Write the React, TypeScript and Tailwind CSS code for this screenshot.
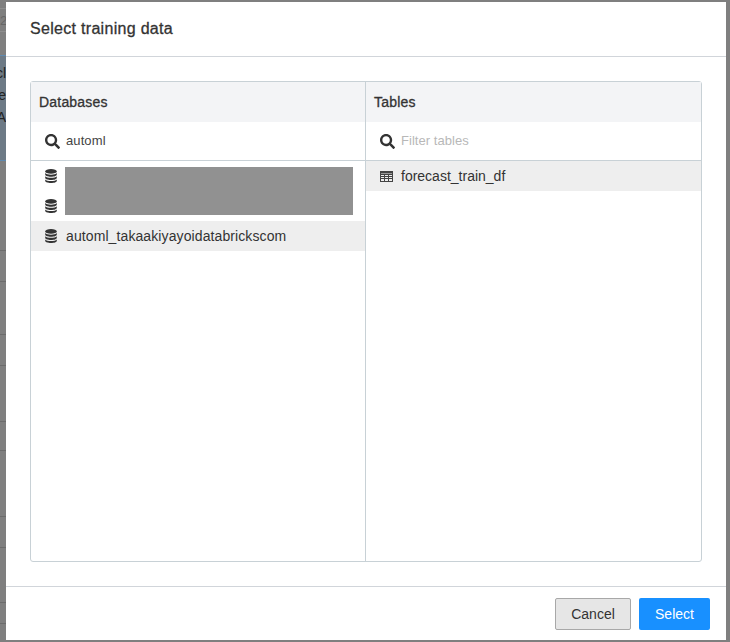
import { FaSearch } from "react-icons/fa";

function DbIcon() {
  return (
    <svg width="12" height="14" viewBox="0 0 12 14" className="shrink-0 text-[#333]" fill="currentColor">
      <ellipse cx="6" cy="2.400" rx="5.800" ry="2.400" />
      <path d="M0.200 4.100c1 1 3.100 1.600 5.800 1.600s4.800-.6 5.800-1.600v1.300c0 1.300-2.600 2.300-5.800 2.300s-5.800-1-5.800-2.300z" />
      <path d="M0.200 7.200c1 1 3.100 1.600 5.800 1.600s4.800-.6 5.800-1.600v1.500c0 1.300-2.600 2.300-5.800 2.300s-5.800-1-5.800-2.300z" />
      <path d="M0.200 10.500c1 1 3.100 1.500 5.800 1.500s4.800-.5 5.800-1.500v1.200c0 1.300-2.600 2.300-5.800 2.300s-5.800-1-5.800-2.300z" />
    </svg>
  );
}

function TableIcon() {
  return (
    <svg width="13" height="11" viewBox="0 0 13 11" className="shrink-0 text-[#444]" fill="none" stroke="currentColor" strokeWidth="1">
      <rect x="0.500" y="0.500" width="12" height="10" />
      <path d="M0.500 3.500h12M0.500 5.500h12M0.500 7.500h12M4.500 3v7.500M8.500 3v7.500" />
      <path d="M0.500 1.500h12" strokeWidth="2" />
    </svg>
  );
}

export default function App() {
  return (
    <div className="relative w-[730px] h-[642px] overflow-hidden bg-[#7f7f7f] font-['Liberation_Sans',Arial,sans-serif]">
      {/* page behind the modal, only a few px of it show on the left */}
      <div className="flex flex-col w-[6px] h-full">
        <div className="h-[8px] shrink-0" />
        <div className="h-[24px] shrink-0 border-y border-[#8e8e8e] flex items-center text-[13px] leading-none text-[#666] overflow-hidden">2</div>
        <div className="h-[23px] shrink-0" />
        <div className="h-[106px] shrink-0 bg-[#6d7a86] border-y border-[#5f8ab0] flex flex-col items-end pt-[10px] gap-[7px] text-[14px] leading-[15px] text-[#222] overflow-hidden">
          <span className="whitespace-nowrap">cl</span>
          <span className="whitespace-nowrap">e</span>
          <span className="whitespace-nowrap">A</span>
        </div>
        <div className="h-[90px] shrink-0 border-b border-[#6c6c6c]" />
        <div className="h-[31px] shrink-0 border-b border-[#6c6c6c]" />
        <div className="h-[53px] shrink-0 border-b border-[#6c6c6c]" />
        <div className="h-[31px] shrink-0 border-b border-[#6c6c6c]" />
        <div className="h-[56px] shrink-0 border-b border-[#6c6c6c]" />
        <div className="h-[29px] shrink-0 border-b border-[#6c6c6c]" />
        <div className="h-[66px] shrink-0 border-b border-[#6c6c6c]" />
        <div className="h-[31px] shrink-0 border-b border-[#6c6c6c]" />
        <div className="h-[55px] shrink-0 border-b border-[#6c6c6c]" />
        <div className="h-[21px] shrink-0 border-b border-[#6c6c6c]" />
      </div>

      <div className="absolute left-[6px] top-[2px] w-[720px] h-[638px] flex flex-col bg-white">
        <div className="h-[55px] shrink-0 flex items-center px-6 border-b border-[#d1d5da]">
          <h1 className="text-base tracking-[0.3px] text-[#333] [-webkit-text-stroke:0.3px_#333]">Select training data</h1>
        </div>

        <div className="flex-1 px-6 pt-6 pb-6 min-h-0">
          <div className="flex h-[481px] border border-[#c8d1d6] rounded-[3px]">
            <div className="w-[335px] flex flex-col border-r border-[#c8d1d6]">
              <div className="h-10 shrink-0 bg-[#f3f4f6] flex items-center px-2 text-sm tracking-[0.2px] text-[#333] [-webkit-text-stroke:0.3px_#333]">
                Databases
              </div>
              <div className="h-[39px] shrink-0 flex items-center gap-[6px] pl-[14px] border-b border-[#c8d1d6]">
                <FaSearch size={15} className="text-[#333]" />
                <span className="text-[13px] tracking-[0.1px] text-[#444]">automl</span>
              </div>
              <div className="relative h-[60px] shrink-0">
                <div className="h-[30px] flex items-center pl-[14px]">
                  <DbIcon />
                </div>
                <div className="h-[30px] flex items-center pl-[14px]">
                  <DbIcon />
                </div>
                <div className="absolute left-[34px] top-[6px] w-[288px] h-[48px] bg-[#919191]" />
              </div>
              <div className="h-[30px] shrink-0 bg-[#eeeeee] flex items-center gap-[9px] pl-[14px] text-sm tracking-[0.1px] text-[#333]">
                <DbIcon />
                <span>automl_takaakiyayoidatabrickscom</span>
              </div>
            </div>
            <div className="flex-1 flex flex-col">
              <div className="h-10 shrink-0 bg-[#f3f4f6] flex items-center px-2 text-sm tracking-[0.2px] text-[#333] [-webkit-text-stroke:0.3px_#333]">
                Tables
              </div>
              <div className="h-[39px] shrink-0 flex items-center gap-[6px] pl-[14px] border-b border-[#c8d1d6]">
                <FaSearch size={15} className="text-[#333]" />
                <span className="text-[13px] tracking-[0.05px] text-[#b8b8b8]">Filter tables</span>
              </div>
              <div className="h-[30px] shrink-0 bg-[#eeeeee] flex items-center gap-[8px] pl-[14px] text-sm text-[#333]">
                <TableIcon />
                <span>forecast_train_df</span>
              </div>
            </div>
          </div>
        </div>

        <div className="h-[54px] shrink-0 flex items-center justify-end gap-2 pr-4 border-t border-[#d1d5da]">
          <button className="h-8 w-[76px] rounded-[2px] border border-[#a8a8a8] bg-[#e6e6e6] text-sm text-[#333]">Cancel</button>
          <button className="h-8 w-[71px] rounded-[2px] bg-[#1890ff] text-sm text-white">Select</button>
        </div>
      </div>
    </div>
  );
}
